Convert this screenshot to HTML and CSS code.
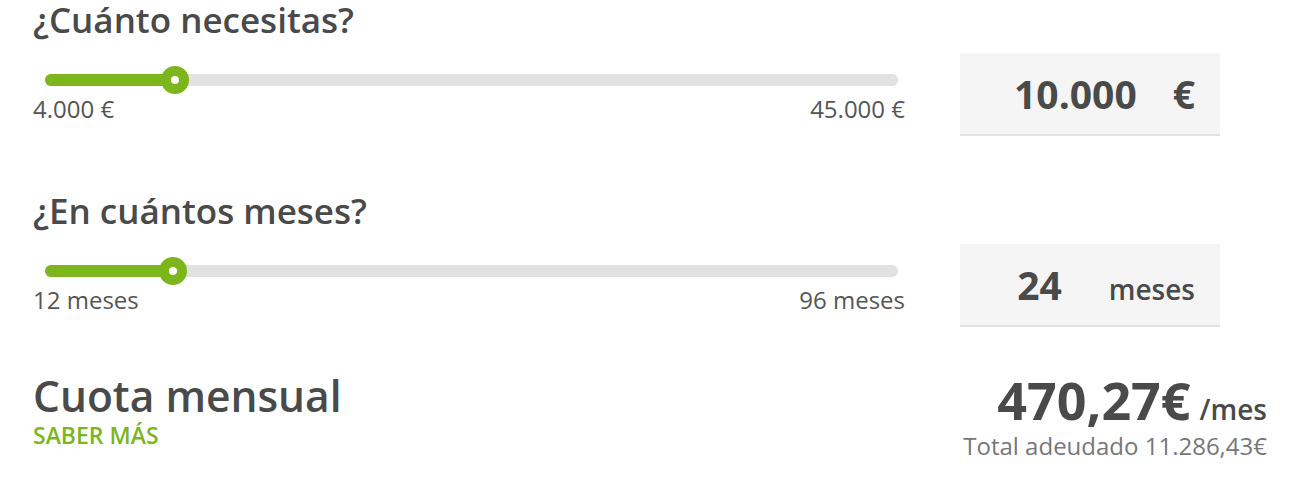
FILE: index.html
```html
<!DOCTYPE html>
<html lang="es">
<head>
<meta charset="utf-8">
<title>Calculadora de préstamo</title>
<link rel="stylesheet" href="styles.css">
</head>
<body>
<div class="calc">
  <section class="row">
    <div class="field">
      <h2 class="question">¿Cuánto necesitas?</h2>
      <div class="slider">
        <div class="fill" style="width:130px"></div>
        <div class="thumb" style="left:116px"></div>
      </div>
      <div class="limits"><span>4.000 €</span><span>45.000 €</span></div>
    </div>
    <div class="box">
      <span class="value">10.000</span><span class="unit unit-euro">€</span>
    </div>
  </section>
  <section class="row">
    <div class="field">
      <h2 class="question">¿En cuántos meses?</h2>
      <div class="slider">
        <div class="fill" style="width:128px"></div>
        <div class="thumb" style="left:114px"></div>
      </div>
      <div class="limits"><span>12 meses</span><span>96 meses</span></div>
    </div>
    <div class="box">
      <span class="value">24</span><span class="unit unit-months">meses</span>
    </div>
  </section>
  <section class="result">
    <div class="result-label">
      <div class="result-title">Cuota mensual</div>
      <a class="more" href="#">SABER MÁS</a>
    </div>
    <div class="result-value">
      <div class="amount"><span class="amount-num">470,27€</span><span class="per">/mes</span></div>
      <div class="total">Total adeudado 11.286,43€</div>
    </div>
  </section>
</div>
</body>
</html>
```
FILE: styles.css
```css
* { box-sizing: border-box; }
html, body { margin: 0; padding: 0; background: #fff; }
body {
  font-family: "Open Sans", "Liberation Sans", sans-serif;
  color: #4a4a4a;
}
.calc {
  width: 1234px;
  margin-left: 33px;
}
.row {
  display: flex;
  gap: 55px;
  height: 191px;
}
.field { width: 872px; }
.question {
  margin: 0;
  font-size: 35px;
  font-weight: 600;
  line-height: 40px;
  color: #4a4a4a;
}
.slider {
  position: relative;
  margin: 34px 7px 0 12px;
  height: 12px;
  border-radius: 6px;
  background: #e2e2e2;
}
.fill {
  height: 12px;
  border-radius: 6px;
  background: #7cb51c;
}
.thumb {
  position: absolute;
  top: -8px;
  width: 28px;
  height: 28px;
  border-radius: 50%;
  border: 10px solid #7cb51c;
  background: #fff;
}
.limits {
  display: flex;
  justify-content: space-between;
  margin-top: 9px;
  font-size: 24px;
  line-height: 28px;
  color: #555;
}
.box {
  width: 260px;
  height: 83px;
  margin-top: 53px;
  background: #f5f5f5;
  border-bottom: 2px solid #e2e2e2;
  display: flex;
  justify-content: flex-end;
  align-items: baseline;
  padding: 19px 25px 0 0;
  font-weight: 700;
  color: #4a4a4a;
}
.value { font-size: 39px; line-height: 44px; }
.unit { font-size: 39px; line-height: 44px; }
.unit-euro { margin-left: 36px; }
.unit-months { margin-left: 47px; font-size: 28px; font-weight: 600; }
.result {
  display: flex;
  justify-content: space-between;
  margin-top: -9px;
}
.result-title {
  font-size: 42.5px;
  font-weight: 600;
  line-height: 46px;
  color: #4a4a4a;
}
.more {
  display: block;
  margin-top: 3px;
  font-size: 23px;
  font-weight: 600;
  line-height: 26px;
  color: #7cb51c;
  text-decoration: none;
}
.result-value { text-align: right; }
.amount { line-height: 56px; margin-top: -1px; }
.amount-num { font-size: 52px; font-weight: 700; }
.per { font-size: 28px; font-weight: 600; margin-left: 9px; }
.total {
  font-size: 24px;
  line-height: 28px;
  color: #777;
  margin-top: -10px;
}
```
